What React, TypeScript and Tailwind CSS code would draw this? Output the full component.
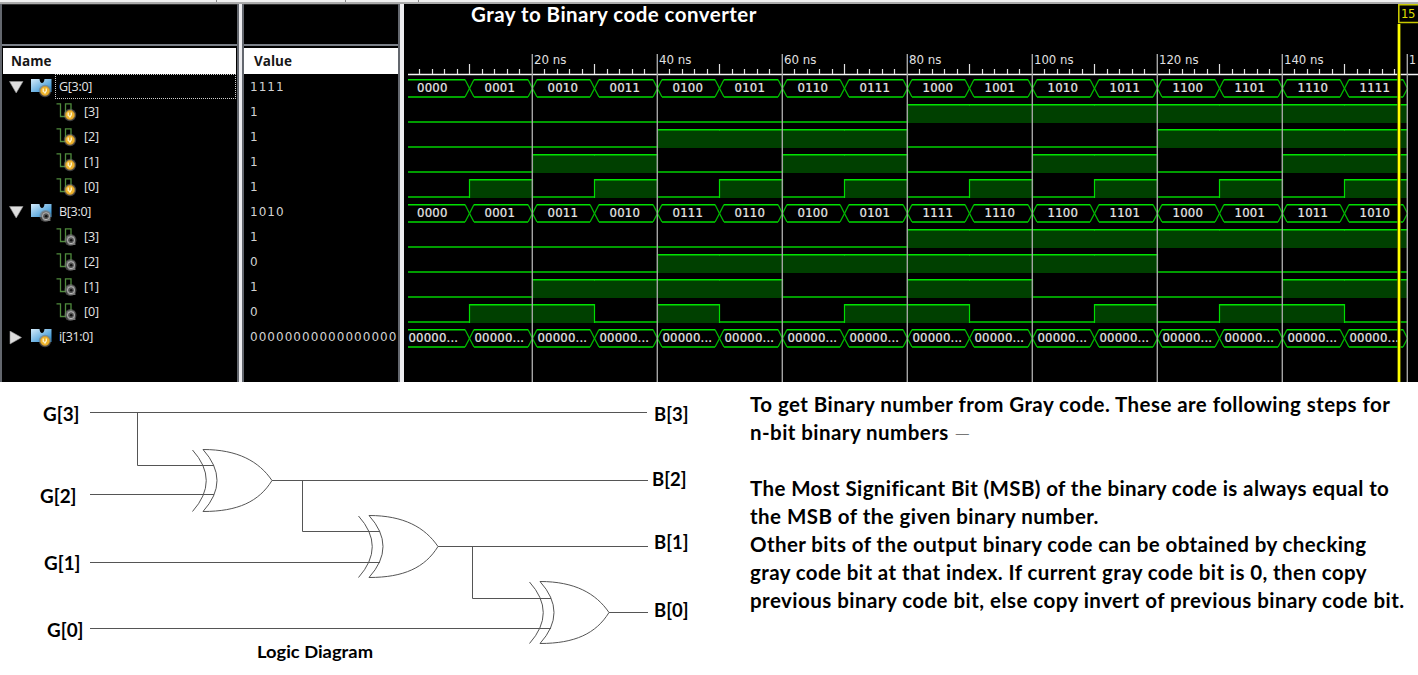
import React from "react";

const G = "0000 0001 0010 0011 0100 0101 0110 0111 1000 1001 1010 1011 1100 1101 1110 1111".split(" ");
const B = "0000 0001 0011 0010 0111 0110 0100 0101 1111 1110 1100 1101 1000 1001 1011 1010".split(" ");
const Z = G.map(() => "00000...");
const START = 4;
const STEP = 62.5;
const FACE = "DejaVu Sans Condensed, DejaVu Sans, sans-serif";
const xAt = (i: number) => Math.floor(START - 1 + i * STEP + 0.01) + 0.5;

function Bus({ y, values }: { y: number; values: string[] }) {
  return (
    <g>
      {values.map((v, i) => {
        const l = i === 0 ? START : xAt(i) + 4.5;
        const r = xAt(i + 1) - 4.5;
        const cx = xAt(i + 1);
        return (
          <g key={i}>
            <path d={`M${r} ${y + 0.5}L${cx} ${y + 9.5}L${r} ${y + 18}`} fill="none" stroke="#00b800" strokeWidth="1.3" />
            {i < values.length - 1 && (
              <path d={`M${cx + 4.5} ${y + 0.5}L${cx} ${y + 9.5}L${cx + 4.5} ${y + 18}`} fill="none" stroke="#00b800" strokeWidth="1.3" />
            )}
            <path d={`M${l} ${y + 0.7}H${r}`} stroke="#00e000" strokeWidth="1.4" />
            <path d={`M${l} ${y + 18}H${r}`} stroke="#00a400" strokeWidth="1.8" />
            <text
              x={v.length > 4 ? (i === 0 ? 4.5 : xAt(i) + 5) : i === 0 ? 13 : xAt(i) + 15}
              y={y + 13.3}
              fill="#e8e8e8"
              stroke="#e8e8e8"
              strokeWidth="0.2"
              fontSize="13"
              fontFamily={FACE}
              textLength={v.length > 4 ? 49.5 : 30.5}
            >
              {v}
            </text>
          </g>
        );
      })}
    </g>
  );
}

function Wave({ y, values, bit }: { y: number; values: string[]; bit: number }) {
  return (
    <g>
      {values.map((v, i) => {
        if (v[bit] !== "1") return null;
        const l = i === 0 ? START : xAt(i) - 0.5;
        return <rect key={i} x={l} y={y} width={xAt(i + 1) + 0.5 - l} height="19" fill="#004000" shapeRendering="crispEdges" />;
      })}
      {values.map((v, i) => {
        const hi = v[bit] === "1";
        const prev = i > 0 && values[i - 1][bit] === "1";
        const l = i === 0 ? START : xAt(i) - 0.5;
        const r = xAt(i + 1) + 0.5;
        return (
          <g key={i}>
            {hi ? (
              <path d={`M${l} ${y + 0.7}H${r}`} stroke="#00e400" strokeWidth="1.4" />
            ) : (
              <path d={`M${l} ${y + 18}H${r}`} stroke="#009c00" strokeWidth="1.8" />
            )}
            {i > 0 && hi !== prev && <path d={`M${l + 0.5} ${y}V${y + 19}`} stroke="#00dc00" strokeWidth="1.2" />}
          </g>
        );
      })}
    </g>
  );
}

function Waveforms() {
  const ticks = Array.from({ length: 80 }, (_, i) => i + 1);
  return (
    <svg className="block h-[378px] w-[1014px]" viewBox="0 4 1014 378">
      <path d="M4 74.500H1014" stroke="#f4f4f4" strokeWidth="1.3" />
      {ticks.map((t) => {
        const x = Math.floor(3 + t * 12.5) + 0.5;
        return t % 10 ? <path key={t} d={`M${x} ${t % 5 ? 69 : 64}V74`} stroke="#e0e0e0" strokeWidth="1.2" /> : null;
      })}
      <Bus y={79} values={G} />
      {[0, 1, 2, 3].map((b) => <Wave key={b} y={104 + b * 25} values={G} bit={b} />)}
      <Bus y={204} values={B} />
      {[0, 1, 2, 3].map((b) => <Wave key={b} y={229 + b * 25} values={B} bit={b} />)}
      <Bus y={329} values={Z} />
      {[1, 2, 3, 4, 5, 6, 7, 8].map((n) => (
        <g key={n}>
          <path d={`M${3.3 + n * 125} 54V382`} stroke="#a4a4a4" strokeWidth="1.4" />
          <text
            x={5 + n * 125}
            y="63.5"
            fill="#e0e0e0"
            fontSize="13"
            fontFamily={FACE}
            lengthAdjust="spacingAndGlyphs"
            textLength={n === 8 ? 7 : n < 5 ? 32.5 : 39.5}
          >
            {n === 8 ? "1" : `${n * 20} ns`}
          </text>
        </g>
      ))}
      <path d="M995 24V382" stroke="#777700" strokeWidth="3.6" />
      <path d="M995 24V382" stroke="#ffff00" strokeWidth="2" />
      <path d="M1014 4.800H994.800V22.500H1014" fill="#000" stroke="#c8c800" strokeWidth="1.6" />
      <text x="997" y="17.700" fill="#dcdc00" fontSize="13" fontFamily={FACE} textLength="14.500">15</text>
    </svg>
  );
}

function Badge({ yellow }: { yellow: boolean }) {
  return yellow ? (
    <g>
      <circle cx="14" cy="12" r="6.2" fill="#777" opacity=".55" />
      <circle cx="14" cy="12" r="4.7" fill="#eeb32b" stroke="#b98a3a" strokeWidth=".6" />
      <path d="M12.2 9.600V12.400Q13.800 14.400 15.300 12V9.600M15.300 12L13.600 14.600" fill="none" stroke="#fff6d0" strokeWidth="1.3" />
    </g>
  ) : (
    <g>
      <circle cx="14.5" cy="12" r="6" fill="#777" opacity=".55" />
      <path d="M11 8.500Q14.500 6 18.500 8.500L19.500 17H13Q9 13 11 8.500Z" fill="#777" />
      <circle cx="15" cy="12.2" r="3.5" fill="#555" stroke="#b8b8b8" strokeWidth="1" />
      <circle cx="15.2" cy="12.2" r="1.3" fill="#111" />
    </g>
  );
}

function BusIcon({ yellow }: { yellow: boolean }) {
  return (
    <svg className="h-[20px] w-[22px] shrink-0" viewBox="0 0 22 20">
      <defs>
        <linearGradient id="sky" x1="0" y1="0" x2="1" y2="1">
          <stop offset="0" stopColor="#d5ecfb" />
          <stop offset="1" stopColor="#1d86cf" />
        </linearGradient>
      </defs>
      <path d="M0 0H8.500Q9 4 11 4Q13 4 13.500 0H20.500V13H0Z" fill="url(#sky)" />
      <Badge yellow={yellow} />
    </svg>
  );
}

function BitIcon({ yellow }: { yellow: boolean }) {
  return (
    <svg className="h-[20px] w-[22px] shrink-0" viewBox="0 0 22 20">
      <path d="M0.500 0.800H4.500V13.500H9.500V0.800H15V8" fill="none" stroke="#4f8a3c" strokeWidth="1.3" />
      <Badge yellow={yellow} />
    </svg>
  );
}

function SignalRow({ name, open, yellow, bit, selected }: { name: string; open?: boolean; yellow: boolean; bit?: boolean; selected?: boolean }) {
  if (bit)
    return (
      <div className="flex h-[25px] items-start pl-[54px] pt-[4px]">
        <BitIcon yellow={yellow} />
        <span className="ml-[6px] text-[12.5px] leading-[18px] tracking-[-0.1px] text-[#e6e6e6]">{name}</span>
      </div>
    );
  return (
    <div className="flex h-[25px] items-start">
      <svg className="ml-[7px] mt-[7px] h-[14px] w-[15px] shrink-0" viewBox="0 0 15 14">
        <path d={open ? "M0.500 0.500H14L7.200 12Z" : "M1 0V13L12.500 6.500Z"} fill="#dedede" stroke="#999" strokeWidth=".6" />
      </svg>
      <div className="ml-[7px] mt-[5px] flex">
        <BusIcon yellow={yellow} />
      </div>
      <div className={selected ? "ml-[2px] h-[25px] w-[181px] border border-dotted border-[#d0d0d0]" : "ml-[2px] h-[25px] w-[181px] border border-transparent"}>
        <span className="block pl-[3px] pt-[3px] text-[12.5px] leading-[18px] tracking-[-0.3px] text-[#e6e6e6]">{name}</span>
      </div>
    </div>
  );
}

function NamePanel() {
  return (
    <div className="flex h-[378px] w-[239px] flex-col border-x-2 border-[#63676e] bg-black">
      <div className="h-[40px] border-t border-[#333]" />
      <div className="h-[2px] bg-[#7b8088]" />
      <div className="mx-px mt-[2px] h-[26px] bg-white pl-[8px] font-['Open_Sans'] text-[13.5px] font-bold leading-[27px] text-[#161616]">Name</div>
      <div className="font-['Open_Sans']">
        <SignalRow name="G[3:0]" open yellow selected />
        {["[3]", "[2]", "[1]", "[0]"].map((n) => <SignalRow key={n} name={n} bit yellow />)}
        <SignalRow name="B[3:0]" open yellow={false} />
        {["[3]", "[2]", "[1]", "[0]"].map((n) => <SignalRow key={n} name={n} bit yellow={false} />)}
        <SignalRow name="i[31:0]" yellow />
      </div>
    </div>
  );
}

function ValuePanel() {
  return (
    <div className="flex h-[378px] w-[158px] flex-col overflow-hidden border-x-2 border-[#63676e] bg-black">
      <div className="h-[40px] border-t border-[#333]" />
      <div className="h-[2px] shrink-0 bg-[#7b8088]" />
      <div className="mt-[2px] h-[26px] shrink-0 bg-white pl-[10px] font-['Open_Sans'] text-[13.5px] font-bold leading-[27px] text-[#161616]">Value</div>
      <div className="pl-[6px] font-['DejaVu_Sans'] text-[12px] tracking-[1.04px] text-[#d2d2d2]">
        {["1111", "1", "1", "1", "1", "1010", "1", "0", "1", "0", "00000000000000000"].map((v, i) => (
          <div key={i} className="h-[25px] whitespace-nowrap leading-[27px]">{v}</div>
        ))}
      </div>
    </div>
  );
}

function Gate({ x, y }: { x: number; y: number }) {
  return (
    <path
      transform={`translate(${x} ${y})`}
      d="M-10.500 -30.500Q17 0 -10.500 31M0 -31Q28 0 0 31M0 -31C35 -31 56 -19 69 0C56 21 35 31 0 31"
    />
  );
}

function LogicDiagram() {
  const labels: [string, number, number, number][] = [
    ["G[3]", 43, 421, 36.5], ["G[2]", 40, 503, 36.5], ["G[1]", 44, 570, 36.5], ["G[0]", 47, 637, 36.5],
    ["B[3]", 654, 421, 34.5], ["B[2]", 652, 486, 34.5], ["B[1]", 654, 549, 34.5], ["B[0]", 654, 617, 34.5],
  ];
  return (
    <svg className="block h-[293px] w-[740px] shrink-0" viewBox="0 382 740 293">
      <g fill="none" stroke="#555" strokeWidth="1">
        <path d="M90 412.500H647M137.500 412.500V465.500H214M90 494.500H214M272 480.500H648M302.500 480.500V531.500H380M90 562.500H380M438 546.500H648M472.500 546.500V598.500H551M90 628.500H551M609 612.500H648" />
        <Gate x={203} y={480.5} />
        <Gate x={369} y={546.5} />
        <Gate x={540} y={612.5} />
      </g>
      <g fontFamily="Lato, sans-serif" fontWeight="700" fill="#000">
        {labels.map(([t, x, y, w]) => (
          <text key={t} x={x} y={y} fontSize="18" lengthAdjust="spacingAndGlyphs" textLength={w}>{t}</text>
        ))}
        <text x="257" y="658" fontSize="17.5" lengthAdjust="spacingAndGlyphs" textLength="116">Logic Diagram</text>
      </g>
    </svg>
  );
}

function Explanation() {
  return (
    <div className="whitespace-nowrap pl-[10px] pt-[8px] font-['Lato'] text-[20.5px] font-bold leading-[28px] text-black">
      <div className="tracking-[0.44px]">To get Binary number from Gray code. These are following steps for</div>
      <div className="tracking-[0.44px]">n-bit binary numbers <span className="font-['Lato'] font-light">—</span></div>
      <div className="h-[28px]" />
      <div className="tracking-[0.38px]">The Most Significant Bit (MSB) of the binary code is always equal to</div>
      <div className="tracking-[0.45px]">the MSB of the given binary number.</div>
      <div className="tracking-[0.4px]">Other bits of the output binary code can be obtained by checking</div>
      <div className="tracking-[0.4px]">gray code bit at that index. If current gray code bit is 0, then copy</div>
      <div className="tracking-[0.46px]">previous binary code bit, else copy invert of previous binary code bit.</div>
    </div>
  );
}

export default function App() {
  return (
    <div className="h-[675px] w-[1418px] overflow-hidden bg-white">
      <div className="flex h-[4px] border-b-2 border-[#aaa] bg-[#f0f0f0]">
        <div className="w-[217px] border-r border-[#888]" />
        <div className="w-[129px] border-r border-[#888]" />
        <div className="w-[73px] border-r border-[#888]" />
      </div>
      <div className="flex h-[378px] bg-[#ededf0]">
        <NamePanel />
        <div className="w-[3px]" />
        <ValuePanel />
        <div className="w-[4px]" />
        <div className="relative bg-black">
          <Waveforms />
          <div className="absolute left-[67px] top-[-5px] whitespace-nowrap font-['Lato'] text-[20.5px] font-bold leading-[30px] tracking-[0.46px] text-white">Gray to Binary code converter</div>
        </div>
      </div>
      <div className="flex">
        <LogicDiagram />
        <Explanation />
      </div>
    </div>
  );
}
